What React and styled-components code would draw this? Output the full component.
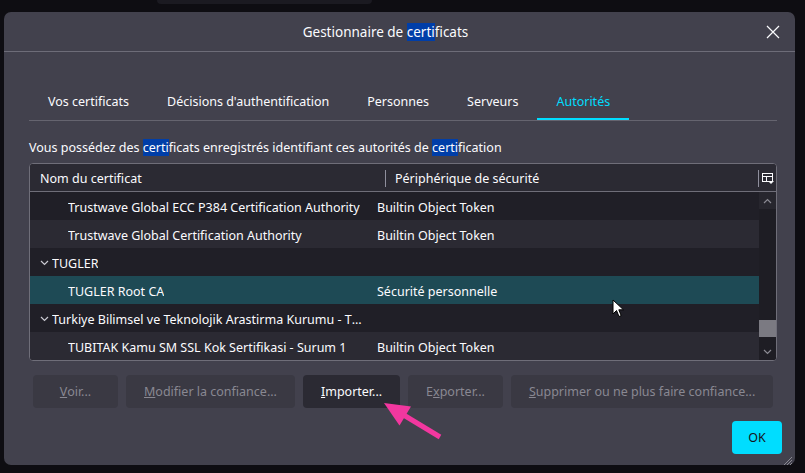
import React from "react";
import styled, { createGlobalStyle } from "styled-components";

const GlobalStyle = createGlobalStyle`
  html, body {
    margin: 0;
    padding: 0;
    background: #0e0d12;
    width: 805px;
    height: 473px;
    overflow: hidden;
  }
  body {
    font-family: "Noto Sans", "Open Sans", sans-serif;
    font-size: 12.5px;
    color: #fbfbfe;
  }
`;

const rows = [
  { kind: "leaf", name: "Trustwave Global ECC P384 Certification Authority", device: "Builtin Object Token" },
  { kind: "leaf", name: "Trustwave Global Certification Authority", device: "Builtin Object Token" },
  { kind: "group", name: "TUGLER" },
  { kind: "leaf", name: "TUGLER Root CA", device: "Sécurité personnelle", selected: true },
  { kind: "group", name: "Turkiye Bilimsel ve Teknolojik Arastirma Kurumu - TUBITAK" },
  { kind: "leaf", name: "TUBITAK Kamu SM SSL Kok Sertifikasi - Surum 1", device: "Builtin Object Token" },
];

const tabs = [
  "Vos certificats",
  "Décisions d'authentification",
  "Personnes",
  "Serveurs",
  "Autorités",
];

const Chevron = ({ up, color = "#c9c9d1" }) => (
  <svg width="9" height="6" viewBox="0 0 9 6">
    <path
      d={up ? "M1 5 L4.5 1.5 L8 5" : "M1 1 L4.5 4.5 L8 1"}
      fill="none"
      stroke={color}
      strokeWidth="1.2"
    />
  </svg>
);

const Hl = ({ children }) => <Mark>{children}</Mark>;

const App = () => {
  return (
    <>
      <GlobalStyle />
      <Page>
        <TopStrip />
        <Dialog>
          <Header>
            <Title>
              Gestionnaire de <Hl>certi</Hl>ficats
            </Title>
            <CloseButton>
              <svg width="14" height="14" viewBox="0 0 14 14">
                <path d="M1 1 L13 13 M13 1 L1 13" stroke="#fbfbfe" strokeWidth="1.2" />
              </svg>
            </CloseButton>
          </Header>

          <Body>
            <TabBar>
              {tabs.map((t) => (
                <Tab key={t} $active={t === "Autorités"}>
                  {t}
                </Tab>
              ))}
            </TabBar>

            <Description>
              Vous possédez des <Hl>certi</Hl>ficats enregistrés identifiant ces autorités de{" "}
              <Hl>certi</Hl>fication
            </Description>

            <Tree>
              <TreeHead>
                <HeadCell $w="345px">Nom du certificat</HeadCell>
                <HeadCell $sep $grow>
                  Périphérique de sécurité
                </HeadCell>
                <ColumnPicker>
                  <svg width="12" height="12" viewBox="0 0 12 12">
                    <rect x="0.5" y="0.5" width="10" height="8" fill="none" stroke="#fbfbfe" />
                    <path d="M0.5 3.5 H10.5 M4.5 3.5 V8.5" stroke="#fbfbfe" />
                    <path d="M6 8 H12 L9 11 Z" fill="#fbfbfe" />
                  </svg>
                </ColumnPicker>
              </TreeHead>

              <TreeBody>
                <RowList>
                  {rows.map((r, i) => (
                    <Row key={r.name} $odd={i % 2 === 1} $selected={r.selected}>
                      <NameCell $group={r.kind === "group"}>
                        {r.kind === "group" && (
                          <Twisty>
                            <Chevron />
                          </Twisty>
                        )}
                        <Ellipsis>{r.name}</Ellipsis>
                      </NameCell>
                      <DeviceCell>{r.device}</DeviceCell>
                    </Row>
                  ))}
                </RowList>
                <Scrollbar>
                  <ScrollArrow $top>
                    <Chevron up color="#8a8992" />
                  </ScrollArrow>
                  <ScrollTrack>
                    <Thumb />
                  </ScrollTrack>
                  <ScrollArrow>
                    <Chevron color="#8a8992" />
                  </ScrollArrow>
                </Scrollbar>
              </TreeBody>
            </Tree>

            <ButtonRow>
              <ActionButton disabled $min="85px">
                <u>V</u>oir...
              </ActionButton>
              <ActionButton disabled>
                <u>M</u>odifier la confiance...
              </ActionButton>
              <ActionButton>
                <u>I</u>mporter...
              </ActionButton>
              <ActionButton disabled>
                E<u>x</u>porter...
              </ActionButton>
              <ActionButton disabled>
                <u>S</u>upprimer ou ne plus faire confiance...
              </ActionButton>
            </ButtonRow>

            <Footer>
              <PrimaryButton>OK</PrimaryButton>
            </Footer>
          </Body>

          <Grip>
            <svg width="10" height="10" viewBox="0 0 10 10">
              <path d="M9 1 L1 9 M9 4 L4 9 M9 7 L7 9" stroke="#8a8992" strokeWidth="1" />
            </svg>
          </Grip>

          <Cursor>
            <svg width="14" height="20" viewBox="0 0 14 20">
              <path
                d="M1 1 L1 15 L4.5 11.5 L7 17.5 L9.2 16.6 L6.8 10.8 L11.5 10.8 Z"
                fill="#ffffff"
                stroke="#000000"
                strokeWidth="1"
                strokeLinejoin="round"
              />
            </svg>
          </Cursor>
        </Dialog>

        <Annotation width="805" height="473" viewBox="0 0 805 473">
          <line x1="440" y1="437" x2="402" y2="414" stroke="#f2379f" strokeWidth="5" strokeLinecap="butt" />
          <polygon points="384,403 411,406.5 399.5,425.5" fill="#f2379f" />
        </Annotation>
      </Page>
    </>
  );
};

export default App;

const Page = styled.div`
  position: relative;
  width: 805px;
  height: 473px;
  display: flex;
  flex-direction: column;
`;

const TopStrip = styled.div`
  margin-left: 157px;
  width: 215px;
  height: 4px;
  background: #1b1a21;
  border-radius: 0 0 4px 4px;
`;

const Dialog = styled.div`
  position: relative;
  margin: 8px 0 0 4px;
  width: 791px;
  height: 453px;
  background: #42414d;
  border-radius: 7px;
  display: flex;
  flex-direction: column;
  box-sizing: border-box;
`;

const Header = styled.div`
  height: 40px;
  flex-shrink: 0;
  box-sizing: border-box;
  padding-right: 28px;
  display: flex;
  align-items: center;
  justify-content: center;
  border-bottom: 1px solid #6d6c78;
  position: relative;
`;

const Title = styled.div`
  font-size: 13.5px;
  color: #fbfbfe;
`;

const CloseButton = styled.div`
  position: absolute;
  right: 15px;
  top: 13px;
  width: 14px;
  height: 14px;
  display: flex;
`;

const Mark = styled.span`
  background: #003ea8;
  color: #fbfbfe;
`;

const Body = styled.div`
  flex: 1;
  display: flex;
  flex-direction: column;
  padding: 0 13px 0 25px;
`;

const TabBar = styled.div`
  margin: 30px 5px 0 0;
  display: flex;
  border-bottom: 1px solid #65646f;
`;

const Tab = styled.div`
  height: 38px;
  box-sizing: border-box;
  padding: 3px 19px 0;
  display: flex;
  align-items: center;
  color: ${(p) => (p.$active ? "#00ddff" : "#fbfbfe")};
  border-bottom: 2px solid ${(p) => (p.$active ? "#00ddff" : "transparent")};
  white-space: nowrap;
`;

const Description = styled.div`
  margin: 18px 0 0 0;
  line-height: 18px;
  white-space: nowrap;
`;

const Tree = styled.div`
  margin: 6px 5px 0 0;
  border: 1px solid #6f6e79;
  border-radius: 4px;
  background: #1c1b22;
  overflow: hidden;
  display: flex;
  flex-direction: column;
`;

const TreeHead = styled.div`
  height: 28px;
  box-sizing: border-box;
  padding-top: 2px;
  display: flex;
  align-items: center;
  background: #2b2a33;
  border-bottom: 1px solid #6f6e79;
`;

const HeadCell = styled.div`
  width: ${(p) => p.$w || "auto"};
  flex: ${(p) => (p.$grow ? 1 : "none")};
  padding-left: ${(p) => (p.$sep ? "9px" : "10px")};
  border-left: ${(p) => (p.$sep ? "1px solid #8f8f9d" : "none")};
  line-height: 17px;
  white-space: nowrap;
`;

const ColumnPicker = styled.div`
  width: 15px;
  height: 17px;
  border-left: 1px solid #8f8f9d;
  display: flex;
  align-items: center;
  justify-content: flex-end;
  padding-right: 2px;
`;

const TreeBody = styled.div`
  display: flex;
  height: 168px;
`;

const RowList = styled.div`
  flex: 1;
  display: flex;
  flex-direction: column;
`;

const Row = styled.div`
  height: 28px;
  box-sizing: border-box;
  padding-top: 2px;
  display: flex;
  align-items: center;
  background: ${(p) => (p.$selected ? "#1e4a55" : p.$odd ? "#2b2a33" : "#201f27")};
`;

const NameCell = styled.div`
  width: 341px;
  box-sizing: border-box;
  padding-left: ${(p) => (p.$group ? "6px" : "38px")};
  padding-right: 1px;
  display: flex;
  align-items: center;
  overflow: hidden;
`;

const Twisty = styled.span`
  width: 16px;
  display: flex;
  justify-content: center;
  flex-shrink: 0;
`;

const Ellipsis = styled.span`
  white-space: nowrap;
  overflow: hidden;
  text-overflow: ellipsis;
`;

const DeviceCell = styled.div`
  flex: 1;
  padding-left: 6px;
  white-space: nowrap;
`;

const Scrollbar = styled.div`
  width: 17px;
  display: flex;
  flex-direction: column;
  background: #1e1d24;
`;

const ScrollArrow = styled.div`
  height: 17px;
  display: flex;
  align-items: center;
  justify-content: center;
  background: ${(p) => (p.$top ? "#27262e" : "#1e1d24")};
`;

const ScrollTrack = styled.div`
  flex: 1;
  display: flex;
  flex-direction: column;
  justify-content: flex-end;
  padding-bottom: 6px;
`;

const Thumb = styled.div`
  height: 17px;
  background: #7b7a82;
`;

const ButtonRow = styled.div`
  margin: 14px 0 0 4px;
  display: flex;
  gap: 8px;
`;

const ActionButton = styled.button`
  height: 33px;
  min-width: ${(p) => p.$min || "auto"};
  padding: 0 18px;
  border: none;
  border-radius: 4px;
  font-family: "Noto Sans", "Open Sans", sans-serif;
  font-size: 12.5px;
  background: ${(p) => (p.disabled ? "#3a3943" : "#2b2a33")};
  color: ${(p) => (p.disabled ? "#898892" : "#fbfbfe")};
  white-space: nowrap;
`;

const Footer = styled.div`
  margin-top: 13px;
  display: flex;
  justify-content: flex-end;
`;

const PrimaryButton = styled.button`
  width: 50px;
  height: 33px;
  border: none;
  border-radius: 4px;
  background: #00ddff;
  color: #15141a;
  font-family: "Noto Sans", "Open Sans", sans-serif;
  font-size: 12.5px;
`;

const Grip = styled.div`
  position: absolute;
  right: 2px;
  bottom: 2px;
  width: 10px;
  height: 10px;
`;

const Cursor = styled.div`
  position: absolute;
  left: 608px;
  top: 287px;
  pointer-events: none;
`;

const Annotation = styled.svg`
  position: absolute;
  left: 0;
  top: 0;
  pointer-events: none;
`;
